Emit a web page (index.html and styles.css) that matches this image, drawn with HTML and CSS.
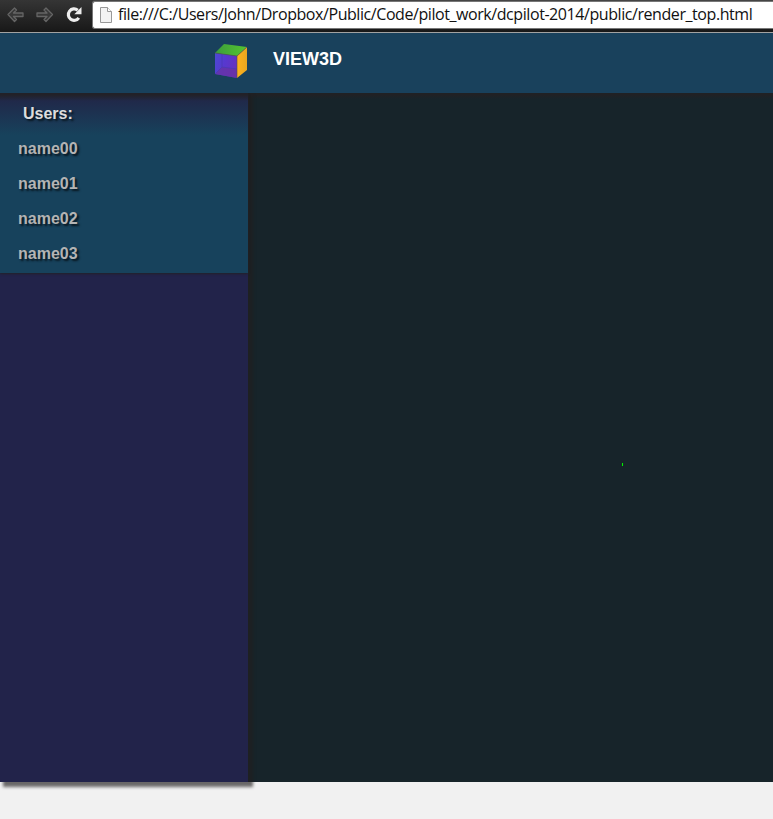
FILE: index.html
```html
<!DOCTYPE html>
<html lang="en">
<head>
<meta charset="utf-8">
<title>VIEW3D</title>
<link rel="stylesheet" href="styles.css">
</head>
<body>
<div class="toolbar">
  <svg class="tools" width="92" height="32" viewBox="0 0 92 32">
    <g fill="#383838" stroke="#656565" stroke-width="1.3" stroke-linejoin="round">
      <path d="M8 14.500 14.500 8 16.500 10 13.500 13H23V16.500H13.500L16.500 19.500 14.500 21.500Z"/>
      <path d="M52.500 14.500 46 8 44 10 47 13H37V16.500H47L44 19.500 46 21.500Z"/>
    </g>
    <path d="M77.700 10.200A5.700 5.700 0 1 0 78.800 17.800" fill="none" stroke="#eee" stroke-width="3.200"/>
    <path d="M81.500 7V14.200H74.300Z" fill="#eee"/>
  </svg>
  <div class="address">
    <svg width="12" height="16" viewBox="0 0 12 16"><path d="M.5.500H7.500L11.500 4.500V15.500H.5Z" fill="#f3f3f3" stroke="#999"/><path d="M7.500.5V4.500H11.500" fill="#fff" stroke="#999"/></svg>
    <span class="url">file:///C:/Users/John/Dropbox/Public/Code/pilot_work/dcpilot-2014/public/render_top.html</span>
  </div>
</div>
<header class="header">
  <svg class="logo" width="34" height="36" viewBox="0 0 34 36">
    <defs>
      <linearGradient id="front" x1="0" y1="0" x2="1" y2=".3"><stop offset="0" stop-color="#4b49d4"/><stop offset=".5" stop-color="#5738cf"/><stop offset="1" stop-color="#6532c0"/></linearGradient>
      <linearGradient id="top" x2="1"><stop stop-color="#3c9d3c"/><stop offset="1" stop-color="#55c52f"/></linearGradient>
      <linearGradient id="side" x2="1"><stop stop-color="#ffb21c"/><stop offset="1" stop-color="#e9a620"/></linearGradient>
    </defs>
    <path d="M1 10 23 13V35L1 31Z" fill="url(#front)"/>
    <path d="M1 31 8 24 23 26V35Z" fill="#69329f" opacity=".7"/>
    <path d="M8 11V24L23 26M8 24 1 31" fill="none" stroke="#483bb1" stroke-width=".7"/>
    <path d="M1 10 10 1 33 4 23 13Z" fill="url(#top)"/>
    <path d="M23 13 33 4V27L23 35Z" fill="url(#side)"/>
    <path d="M1 10 23 13 33 4M23 13V35" fill="none" stroke="#554b52" stroke-width=".6"/>
  </svg>
  <h1>VIEW3D</h1>
</header>
<div class="workspace">
  <aside class="sidebar">
    <div class="users">
      <h2>Users:</h2>
      <ul><li>name00</li><li>name01</li><li>name02</li><li>name03</li></ul>
    </div>
  </aside>
  <main class="viewport"><i class="point"></i></main>
</div>
</body>
</html>
```
FILE: styles.css
```css
* { box-sizing: border-box; }
body { margin: 0; height: 819px; overflow: hidden; background: #f1f1f1; font-family: "Liberation Sans", Arial, sans-serif; }
.toolbar { height: 33px; display: flex; background: linear-gradient(#353535, #181818); border-bottom: 1px solid #a2a2a2; }
.tools { flex: none; }
.address { flex: 1; height: 28px; margin-top: 1px; display: flex; align-items: center; gap: 6px; padding-left: 7px; background: #fff; border: 1px solid #777; border-right: 0; border-radius: 3px 0 0 3px; box-shadow: 0 -1px #444; }
.address svg { flex: none; }
.url { font: 16px/24px "Open Sans", sans-serif; letter-spacing: -0.43px; color: #111; white-space: nowrap; margin-top: -2px; }
.header { height: 60px; display: flex; align-items: flex-start; background: #19415c; padding: 10px 0 0 214px; gap: 25px; }
.header h1 { margin: 6px 0 0; font-size: 18px; line-height: 21px; color: #fff; }
.workspace { height: 689px; display: flex; }
.sidebar { width: 248px; background: #22234a; position: relative; z-index: 1; box-shadow: 4px 4px 3px 1px rgba(34, 30, 30, .65); clip-path: inset(0 -12px -12px 0); }
.users { height: 180px; background: linear-gradient(#222128 0, #222128 2px, #20294a 8px, #17425c 42px); box-shadow: 0 1px 2px #222128; padding-top: 3px; }
.users h2, .users li { margin: 0; height: 35px; font-size: 16px; line-height: 35px; font-weight: bold; text-shadow: 2px 2px 2px #08161f; }
.users h2 { padding-left: 23px; color: #ddd; }
.users ul { margin: 0; padding: 0; list-style: none; }
.users li { padding-left: 18px; color: #b4b4b4; }
.viewport { flex: 1; background: linear-gradient(#202124, #202124 2px, #17242a 6px); position: relative; }
.point { position: absolute; left: 374px; top: 370px; width: 1px; height: 3px; background: #00f000; box-shadow: 0 0 1px #087008; }
```
